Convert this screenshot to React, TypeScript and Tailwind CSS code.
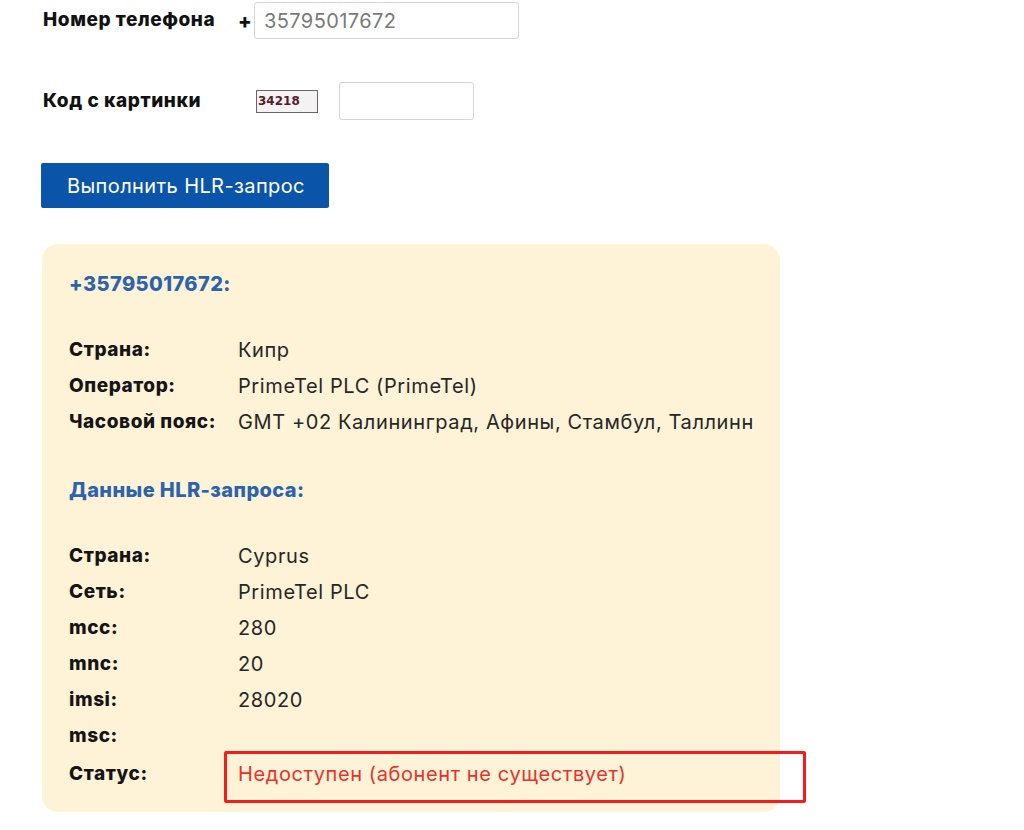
import React from "react";

const labelCls = "w-[169px] shrink-0 font-extrabold text-[19px] tracking-[0.03em] text-[#151515]";
const valueCls = "text-[20px] tracking-[0.03em] text-[#262626]";

function Row({ label, value }: { label: string; value?: string }) {
  return (
    <div className="flex items-center h-[36px]">
      <div className={labelCls}>{label}</div>
      <div className={valueCls}>{value}</div>
    </div>
  );
}

export default function App() {
  return (
    <div className="w-[1024px] h-[830px] bg-white overflow-hidden font-['Inter',sans-serif]">
      <div className="pl-[43px] pt-[2px]">
        <div className="flex items-center h-[37px]">
          <div className="w-[195px] font-extrabold text-[19px] tracking-[0.03em] text-[#111]">Номер телефона</div>
          <div className="w-[16px] font-extrabold text-[20px] text-[#111]">+</div>
          <div className="w-[265px] h-[37px] border border-[#d5d5d5] rounded-[3px] flex items-center pl-[9px] text-[20px] tracking-[0.02em] text-[#7a7a7a]">
            35795017672
          </div>
        </div>
        <div className="flex items-center h-[38px] mt-[43px]">
          <div className="w-[213px] font-extrabold text-[19px] tracking-[0.03em] text-[#111]">Код с картинки</div>
          <div className="w-[62px] h-[23px] border border-[#666] bg-[#f4f2f2] flex items-center pl-[1px] font-['DejaVu_Sans',sans-serif] font-bold text-[12px] text-[#5a1a2a]">
            34218
          </div>
          <div className="ml-[21px] w-[135px] h-[38px] border border-[#d5d5d5] rounded-[3px]" />
        </div>
        <div className="mt-[43px] -ml-[2px] w-[288px] h-[45px] bg-[#0a55a9] rounded-[2px] flex items-center pl-[26px] text-white text-[20px] tracking-[0.02em]">
          Выполнить HLR-запрос
        </div>
      </div>
      <div className="ml-[42px] mt-[36px] w-[738px] h-[568px] bg-[#fff3d7] rounded-[16px] pl-[27px] pt-[22px] relative">
        <div className="h-[36px] flex items-center font-extrabold text-[20px] tracking-[0.02em] text-[#2b63ad]">+35795017672:</div>
        <div className="mt-[30px]">
          <Row label="Страна:" value="Кипр" />
          <Row label="Оператор:" value="PrimeTel PLC (PrimeTel)" />
          <Row label="Часовой пояс:" value="GMT +02 Калининград, Афины, Стамбул, Таллинн" />
        </div>
        <div className="mt-[32px] h-[36px] flex items-center font-extrabold text-[20px] tracking-[0.02em] text-[#2b63ad]">Данные HLR-запроса:</div>
        <div className="mt-[30px]">
          <Row label="Страна:" value="Cyprus" />
          <Row label="Сеть:" value="PrimeTel PLC" />
          <Row label="mcc:" value="280" />
          <Row label="mnc:" value="20" />
          <Row label="imsi:" value="28020" />
          <Row label="msc:" value="" />
          <div className="flex items-center h-[36px] mt-[2px] relative">
            <div className={labelCls}>Статус:</div>
            <div className="text-[20px] tracking-[0.03em] text-[#e8322a]">Недоступен (абонент не существует)</div>
            <div className="absolute left-[155px] top-[-5px] w-[582px] h-[52px] border-[3px] border-[#f41c1c] rounded-[2px]" />
          </div>
        </div>
      </div>
    </div>
  );
}
